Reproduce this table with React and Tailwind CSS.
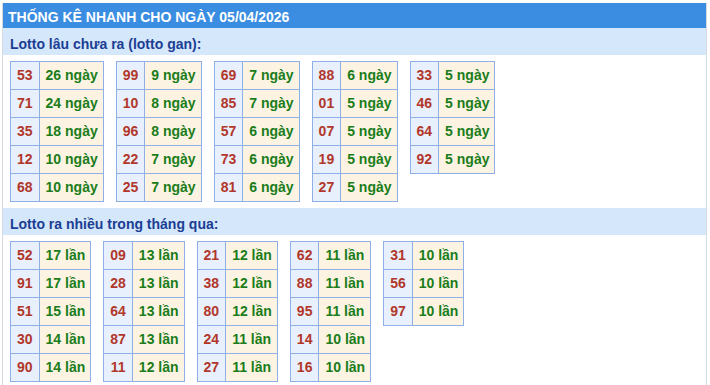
import React from "react";

const gan = [
  [["53", "26 ngày"], ["71", "24 ngày"], ["35", "18 ngày"], ["12", "10 ngày"], ["68", "10 ngày"]],
  [["99", "9 ngày"], ["10", "8 ngày"], ["96", "8 ngày"], ["22", "7 ngày"], ["25", "7 ngày"]],
  [["69", "7 ngày"], ["85", "7 ngày"], ["57", "6 ngày"], ["73", "6 ngày"], ["81", "6 ngày"]],
  [["88", "6 ngày"], ["01", "5 ngày"], ["07", "5 ngày"], ["19", "5 ngày"], ["27", "5 ngày"]],
  [["33", "5 ngày"], ["46", "5 ngày"], ["64", "5 ngày"], ["92", "5 ngày"]],
];

const nhieu = [
  [["52", "17 lần"], ["91", "17 lần"], ["51", "15 lần"], ["30", "14 lần"], ["90", "14 lần"]],
  [["09", "13 lần"], ["28", "13 lần"], ["64", "13 lần"], ["87", "13 lần"], ["11", "12 lần"]],
  [["21", "12 lần"], ["38", "12 lần"], ["80", "12 lần"], ["24", "11 lần"], ["27", "11 lần"]],
  [["62", "11 lần"], ["88", "11 lần"], ["95", "11 lần"], ["14", "10 lần"], ["16", "10 lần"]],
  [["31", "10 lần"], ["56", "10 lần"], ["97", "10 lần"]],
];

function Tbl({ rows }) {
  return (
    <table className="border-collapse self-start">
      <tbody>
        {rows.map(([n, v]) => (
          <tr key={n}>
            <td className="border border-[#8fb0e6] bg-[#e7f0fc] px-[6px] py-0 leading-[27px] text-[#b2372b] text-center whitespace-nowrap">
              {n}
            </td>
            <td className="border border-[#8fb0e6] bg-[#fdf3e2] pl-[6px] pr-[5px] py-0 leading-[27px] text-[#1a7d1a] whitespace-nowrap">
              {v}
            </td>
          </tr>
        ))}
      </tbody>
    </table>
  );
}

function Section({ title, data }) {
  return (
    <div>
      <div className="h-[27px] bg-[#d5e7fb] pl-[7px] pt-[6px] leading-[21px] text-[#1b3e93]">{title}</div>
      <div className="flex gap-3 px-[7px] py-[6px]">
        {data.map((rows, i) => (
          <Tbl key={i} rows={rows} />
        ))}
      </div>
    </div>
  );
}

export default function App() {
  return (
    <div
      className="bg-white min-h-[385px] font-bold text-[14px]"
      style={{ fontFamily: '"Liberation Sans", Arial, sans-serif' }}
    >
      <div className="ml-[2px] mt-[3px] w-[705px] min-h-[382px] border-x border-[#d5dae0]">
        <div className="h-[25px] bg-[#3a8de0] pl-[5px] pt-[4px] leading-[21px] text-white">
          THỐNG KÊ NHANH CHO NGÀY 05/04/2026
        </div>
        <Section title="Lotto lâu chưa ra (lotto gan):" data={gan} />
        <Section title="Lotto ra nhiều trong tháng qua:" data={nhieu} />
      </div>
    </div>
  );
}
